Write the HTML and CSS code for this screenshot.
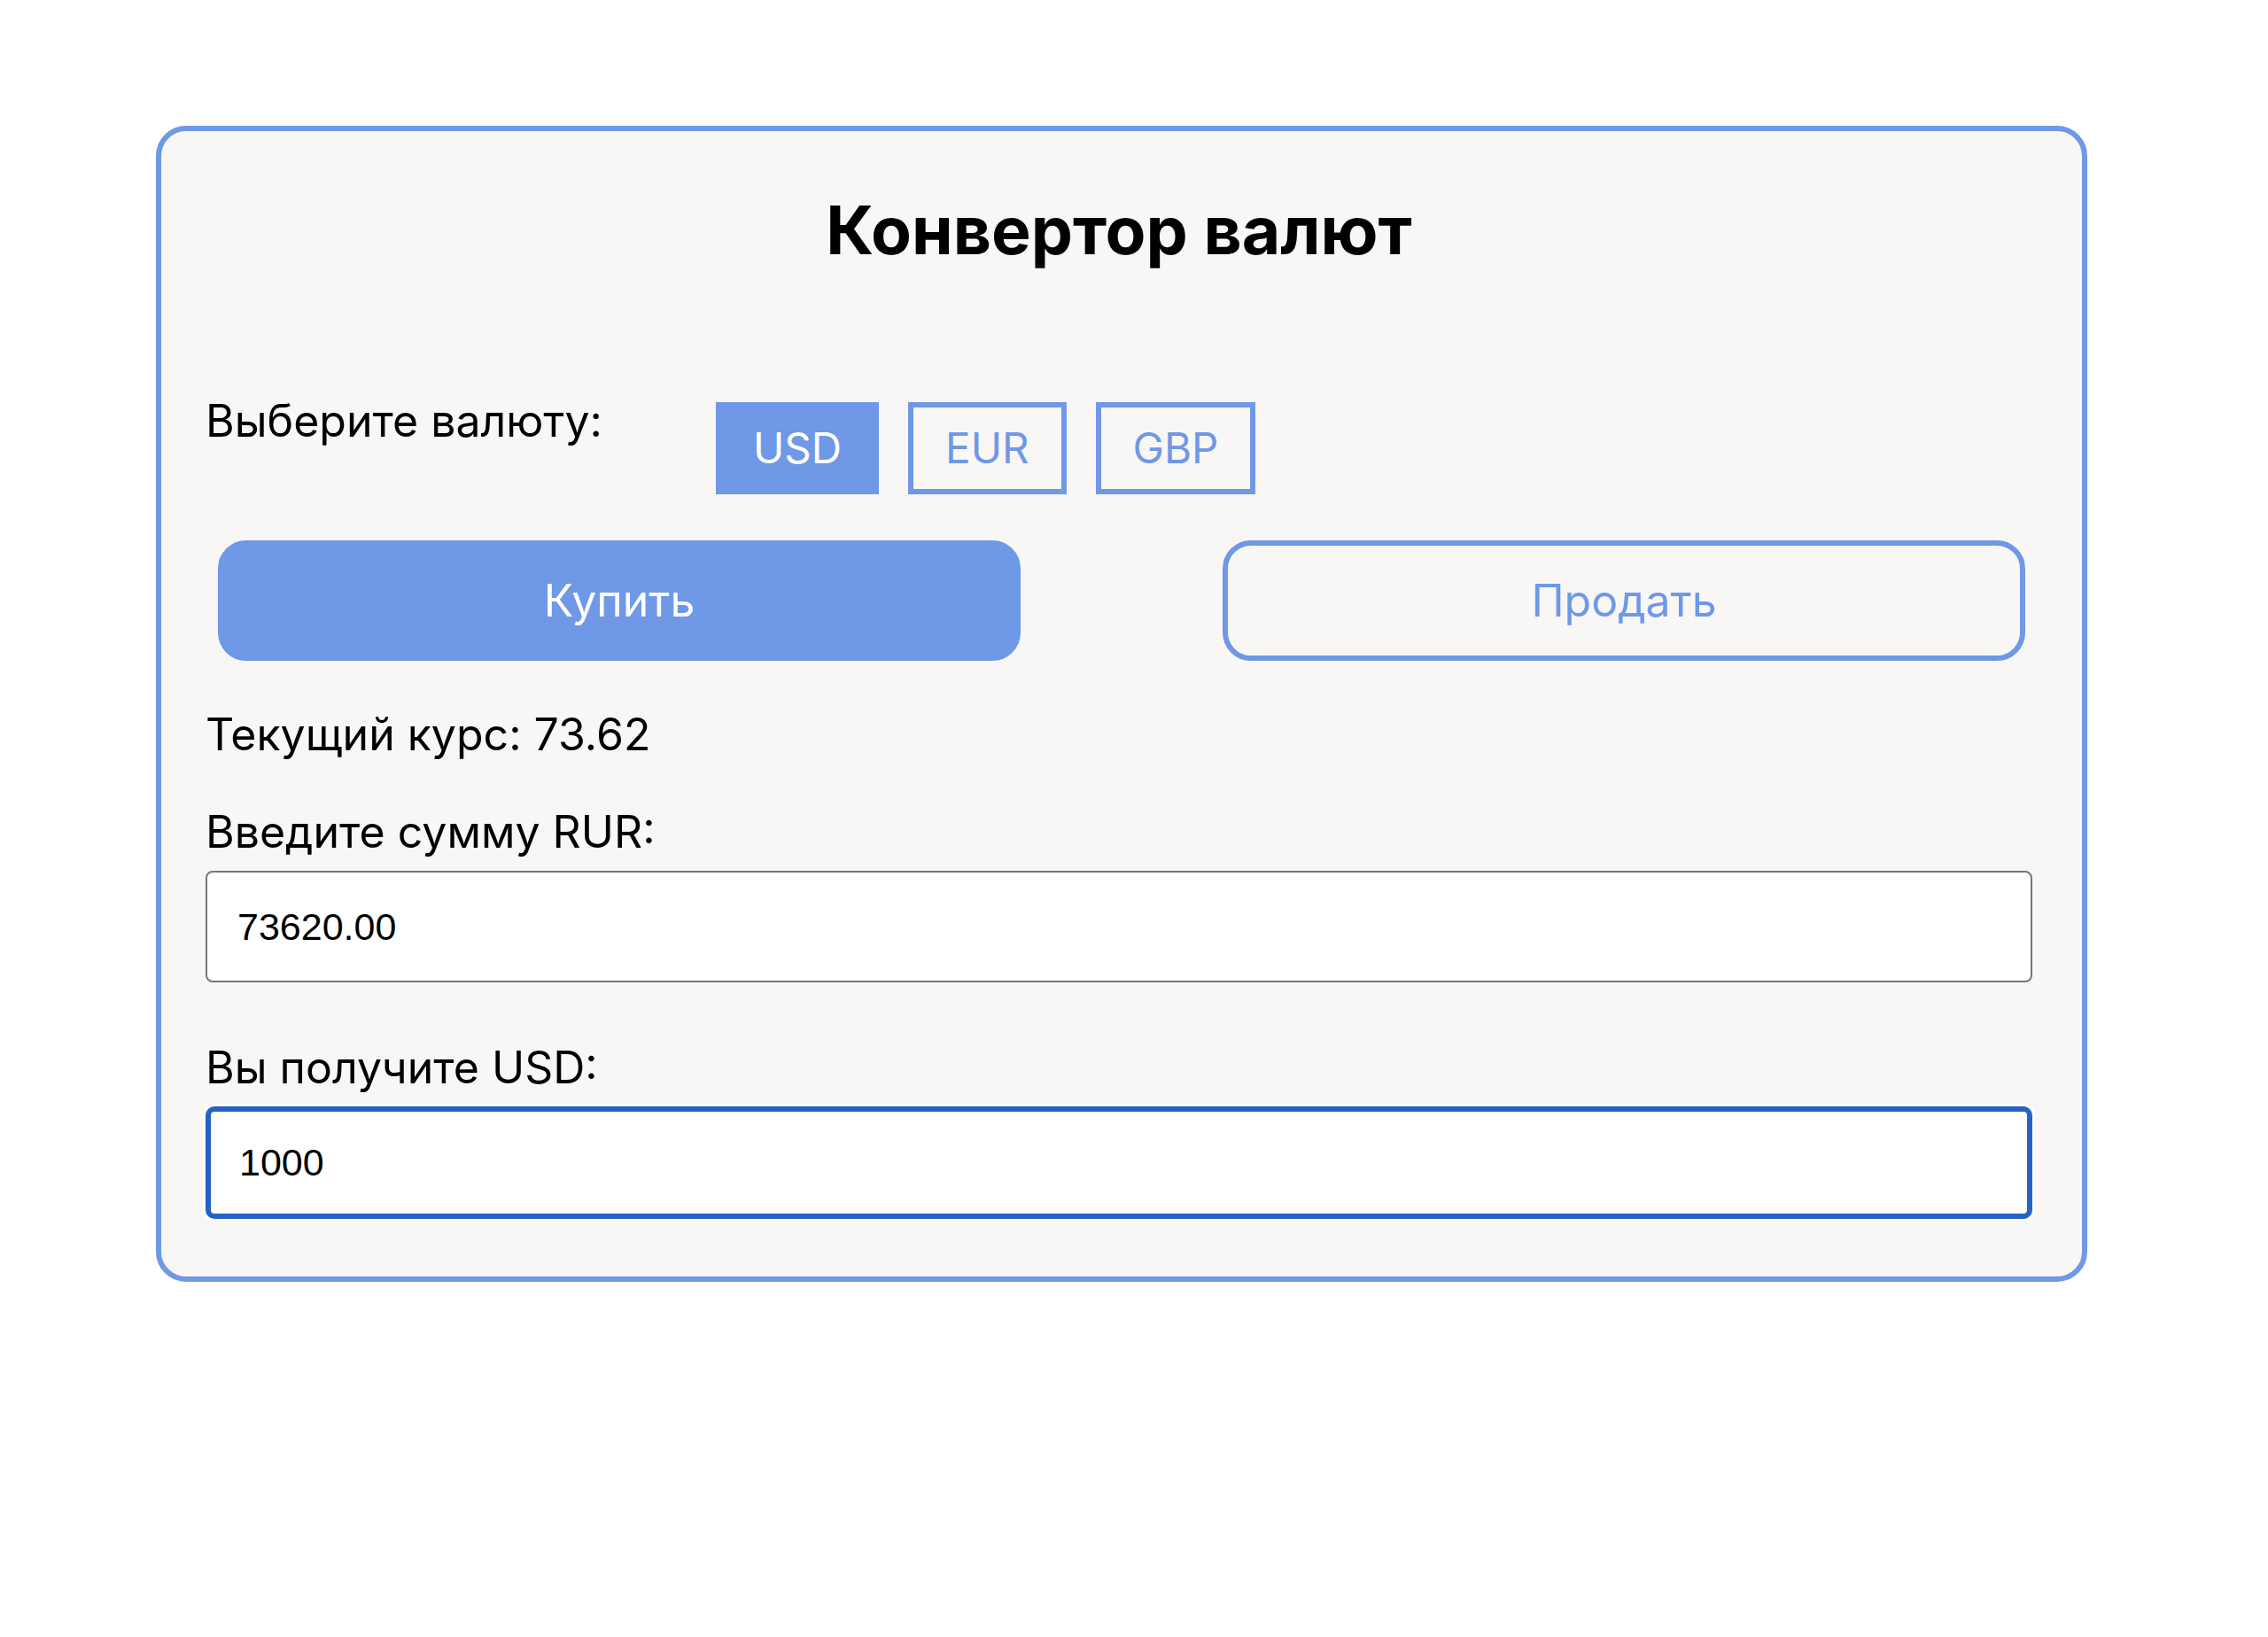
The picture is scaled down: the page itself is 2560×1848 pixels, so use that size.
FILE: index.html
```html
<!DOCTYPE html>
<html lang="ru">
<head>
<meta charset="utf-8">
<title>Конвертор валют</title>
<link rel="stylesheet" href="styles.css">
</head>
<body>
<div class="card">
  <h1 class="title">Конвертор валют</h1>
  <div class="currency-row">
    <span class="label select-label">Выберите валюту:</span>
    <div class="cur-group">
      <button class="cur active">USD</button>
      <button class="cur">EUR</button>
      <button class="cur">GBP</button>
    </div>
  </div>
  <div class="action-row">
    <button class="action buy">Купить</button>
    <button class="action sell">Продать</button>
  </div>
  <p class="label rate">Текущий курс: 73.62</p>
  <label class="label field-label first">Введите сумму RUR:</label>
  <input class="field" type="text" value="73620.00">
  <label class="label field-label second">Вы получите USD:</label>
  <input class="field focused" type="text" value="1000">
</div>
</body>
</html>
```

FILE: styles.css
```css
html, body {
  margin: 0;
  padding: 0;
  background: #ffffff;
}

body {
  font-family: "Inter", "Noto Sans", sans-serif;
  color: #000000;
}

.card {
  box-sizing: border-box;
  width: 2180px;
  margin: 142px 0 0 176px;
  padding: 66px 56px 65px 50px;
  background: #f8f7f6;
  border: 6px solid #6f98e6;
  border-radius: 34px;
}

.title {
  margin: 0;
  font-size: 75px;
  line-height: 92px;
  font-weight: 700;
  text-align: center;
}

.label {
  display: block;
  margin: 0;
  font-size: 50px;
  line-height: 58px;
  font-weight: 400;
}

.currency-row {
  display: flex;
  align-items: flex-start;
  margin-top: 140px;
}

.select-label {
  width: 576px;
  flex: none;
}

.cur-group {
  display: flex;
  gap: 33px;
  margin-top: 8px;
}

.cur {
  box-sizing: border-box;
  height: 104px;
  padding: 0 36px;
  border: 6px solid #6f98e6;
  border-radius: 0;
  background: transparent;
  color: #6f98e6;
  font-family: "Inter", "Noto Sans", sans-serif;
  font-size: 47.5px;
  line-height: 92px;
}

.cur.active {
  background: #6f98e6;
  color: #ffffff;
}

.action-row {
  display: flex;
  justify-content: space-between;
  margin-top: 52px;
  padding: 0 8px 0 14px;
}

.action {
  box-sizing: border-box;
  width: 906px;
  height: 136px;
  border: 6px solid #6f98e6;
  border-radius: 32px;
  font-family: "Inter", "Noto Sans", sans-serif;
  font-size: 50px;
  line-height: 124px;
  padding: 0;
}

.buy {
  background: #6f98e6;
  color: #ffffff;
}

.sell {
  background: transparent;
  color: #6f98e6;
}

.rate {
  margin-top: 54px;
}

.field-label.first {
  margin-top: 52px;
}

.field-label.second {
  margin-top: 67px;
}

.field {
  display: block;
  box-sizing: border-box;
  width: 100%;
  height: 126px;
  margin-top: 15px;
  padding: 0 0 0 34px;
  border: 2px solid #767676;
  border-radius: 8px;
  background: #ffffff;
  font-family: "Liberation Sans", Arial, sans-serif;
  font-size: 43px;
  color: #000000;
  outline: none;
}

.field.focused {
  height: 127px;
  border: 6px solid #2462c7;
  border-radius: 10px;
  padding-left: 32px;
  box-shadow: 0 0 0 3px #ffffff;
}
```
